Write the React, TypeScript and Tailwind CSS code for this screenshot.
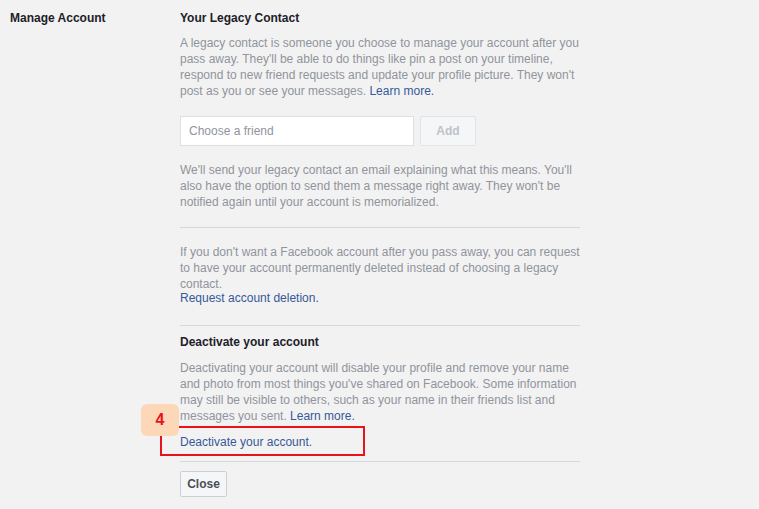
import React from "react";

const link = "text-[#365899]";

export default function App() {
  return (
    <div className="min-h-[509px] w-[759px] bg-[#f2f2f2] font-['Liberation_Sans',Arial,sans-serif] text-[12px] leading-[16px] text-[#90949c]">
      <div className="flex pt-[10px]">
        <div className="w-[180px] pl-[10px] font-bold text-[#1d2129]">Manage Account</div>

        <div className="w-[400px]">
          <h3 className="font-bold text-[#1d2129]">Your Legacy Contact</h3>
          <p className="mt-[9px]">
            A legacy contact is someone you choose to manage your account after you pass away. They'll be able to do
            things like pin a post on your timeline, respond to new friend requests and update your profile picture.
            They won't post as you or see your messages. <a className={link}>Learn more.</a>
          </p>

          <div className="mt-[17px] flex gap-[6px]">
            <div className="flex h-[30px] w-[234px] items-center border border-[#dddfe2] bg-white px-[8px] text-[#90949c]">
              Choose a friend
            </div>
            <button className="h-[30px] w-[56px] rounded-[2px] border border-[#e2e4e7] bg-[#f5f6f7] font-bold text-[#bec3c9]">
              Add
            </button>
          </div>

          <p className="mt-[16px] pr-[2px]">
            We'll send your legacy contact an email explaining what this means. You'll also have the option to send
            them a message right away. They won't be notified again until your account is memorialized.
          </p>

          <div className="mt-[17px] h-px bg-[#d6d7d9]" />

          <p className="mt-[16px]">
            If you don't want a Facebook account after you pass away, you can request to have your account permanently
            deleted instead of choosing a legacy contact.
          </p>
          <div className={`-mt-[2px] ${link}`}>Request account deletion.</div>

          <div className="mt-[19px] h-px bg-[#d6d7d9]" />

          <h3 className="mt-[8px] font-bold text-[#1d2129]">Deactivate your account</h3>
          <p className="mt-[10px]">
            Deactivating your account will disable your profile and remove your name and photo from most things you've
            shared on Facebook. Some information may still be visible to others, such as your name in their friends
            list and messages you sent. <a className={link}>Learn more.</a>
          </p>

          <div className="relative mt-[10px]">
            <a className={link}>Deactivate your account.</a>
            <div className="pointer-events-none absolute left-[-20px] top-[-8px] h-[30px] w-[205px] border-2 border-[#e8131b]" />
            <div className="absolute left-[-39px] top-[-30px] flex h-[32px] w-[38px] items-center justify-center rounded-[6px] bg-[#fcd8b8] text-[16px] font-bold text-[#e8131b]">
              4
            </div>
          </div>

          <div className="mt-[11px] h-px bg-[#d6d7d9]" />

          <button className="mt-[9px] h-[26px] w-[47px] rounded-[2px] border border-[#ccd0d5] bg-[#f5f6f7] font-bold text-[#4b4f56]">
            Close
          </button>
        </div>
      </div>
    </div>
  );
}
